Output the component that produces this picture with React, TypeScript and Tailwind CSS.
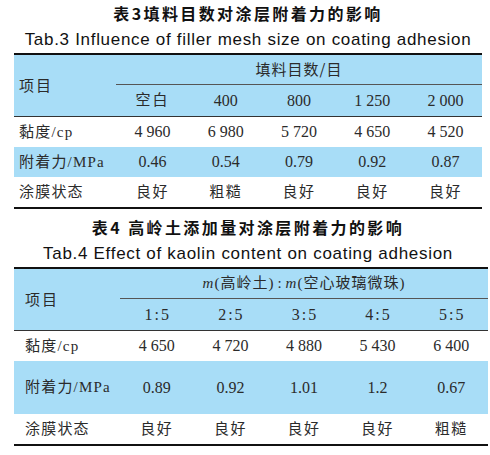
const serif = "font-['Liberation_Serif','Noto_Sans_CJK_SC',serif]";
const blue = 'bg-[#a8ddf7]';

type Row = { label: string; values: string[]; tall?: boolean; shaded?: boolean };

const table3: Row[] = [
  { label: '黏度/cp', values: ['4 960', '6 980', '5 720', '4 650', '4 520'] },
  { label: '附着力/MPa', values: ['0.46', '0.54', '0.79', '0.92', '0.87'], shaded: true },
  { label: '涂膜状态', values: ['良好', '粗糙', '良好', '良好', '良好'] },
];

const table4: Row[] = [
  { label: '黏度/cp', values: ['4 650', '4 720', '4 880', '5 430', '6 400'] },
  { label: '附着力/MPa', values: ['0.89', '0.92', '1.01', '1.2', '0.67'], shaded: true, tall: true },
  { label: '涂膜状态', values: ['良好', '良好', '良好', '良好', '粗糙'] },
];

function isCjk(s: string) {
  return /[\u4e00-\u9fff]/.test(s);
}

function BodyRows({ rows, labelPad, tallHeight }: { rows: Row[]; labelPad: string; tallHeight: string }) {
  return (
    <>
      {rows.map((r) => (
        <div
          key={r.label}
          className={`col-span-6 grid grid-cols-subgrid items-center ${r.tall ? tallHeight : 'h-[30px]'} ${r.shaded ? blue : ''}`}
        >
          <div className={`${labelPad} text-[15px] tracking-[1.2px] whitespace-nowrap`}>{r.label}</div>
          {r.values.map((v, i) => (
            <div
              key={i}
              className={`text-center ${isCjk(v) ? 'text-[15px] tracking-[1.5px]' : 'text-[16px]'}`}
            >
              {v}
            </div>
          ))}
        </div>
      ))}
    </>
  );
}

function Titles({ zh, en }: { zh: string; en: string }) {
  return (
    <div className="flex flex-col items-center pl-[6px] text-[#111]">
      <div className="h-[20px] leading-[20px] text-[16px] font-bold tracking-[2.4px] font-['Noto_Sans_CJK_SC',sans-serif]">
        {zh}
      </div>
      <div className="mt-[6px] h-[22px] leading-[22px] text-[17px] tracking-[0.7px] font-['Liberation_Sans',sans-serif]">
        {en}
      </div>
    </div>
  );
}

function Ratio({ a }: { a: string }) {
  return (
    <div className="text-center self-center text-[16px]">
      {a}
      <span className="mx-[2px]">:</span>5
    </div>
  );
}

export default function App() {
  return (
    <div className={`w-[490px] h-[455px] bg-white text-[#2b2b2b] ${serif} overflow-hidden`}>
      <div className="pt-[3px]">
        <Titles zh="表3填料目数对涂层附着力的影响" en="Tab.3 Influence of filler mesh size on coating adhesion" />
      </div>

      {/* table 3 */}
      <div className="ml-[14px] mt-[2px] w-[468px] border-t-2 border-b-2 border-[#111]">
        <div className="grid grid-cols-[102px_repeat(5,1fr)]">
          <div className={`col-span-6 grid grid-cols-subgrid grid-rows-[30px_31px] ${blue} border-b border-[#333]`}>
            <div className="row-span-2 flex items-center pl-[5px] text-[15px] tracking-[2px] font-['Noto_Sans_CJK_SC',sans-serif]">
              项目
            </div>
            <div className="col-span-5 flex items-center justify-center border-b border-[#555] text-[15px] tracking-[1px] font-['Noto_Sans_CJK_SC',sans-serif]">
              填料目数/目
            </div>
            <div className="text-center self-center text-[15px] tracking-[2px]">空白</div>
            <div className="text-center self-center text-[16px]">400</div>
            <div className="text-center self-center text-[16px]">800</div>
            <div className="text-center self-center text-[16px]">1 250</div>
            <div className="text-center self-center text-[16px]">2 000</div>
          </div>
          <BodyRows rows={table3} labelPad="pl-[5px]" tallHeight="h-[31px]" />
        </div>
      </div>

      <div className="mt-[8px]">
        <Titles zh="表4 高岭土添加量对涂层附着力的影响" en="Tab.4 Effect of kaolin content on coating adhesion" />
      </div>

      {/* table 4 */}
      <div className="ml-[14px] mt-[2px] w-[474px] border-t-2 border-b-2 border-[#111]">
        <div className="grid grid-cols-[106px_repeat(5,1fr)]">
          <div className={`col-span-6 grid grid-cols-subgrid grid-rows-[30px_31px] ${blue} border-b border-[#333]`}>
            <div className="row-span-2 flex items-center pl-[11px] text-[15px] tracking-[2px] font-['Noto_Sans_CJK_SC',sans-serif]">
              项目
            </div>
            <div className="col-span-5 flex items-center justify-center border-b border-[#555] text-[15px] tracking-[1px]">
              <span className="italic">m</span>(高岭土)<span className="mx-[3px]">:</span>
              <span className="italic">m</span>(空心玻璃微珠)
            </div>
            {['1', '2', '3', '4', '5'].map((v) => (
              <Ratio key={v} a={v} />
            ))}
          </div>
          <BodyRows rows={table4} labelPad="pl-[11px]" tallHeight="h-[53px]" />
        </div>
      </div>
    </div>
  );
}
